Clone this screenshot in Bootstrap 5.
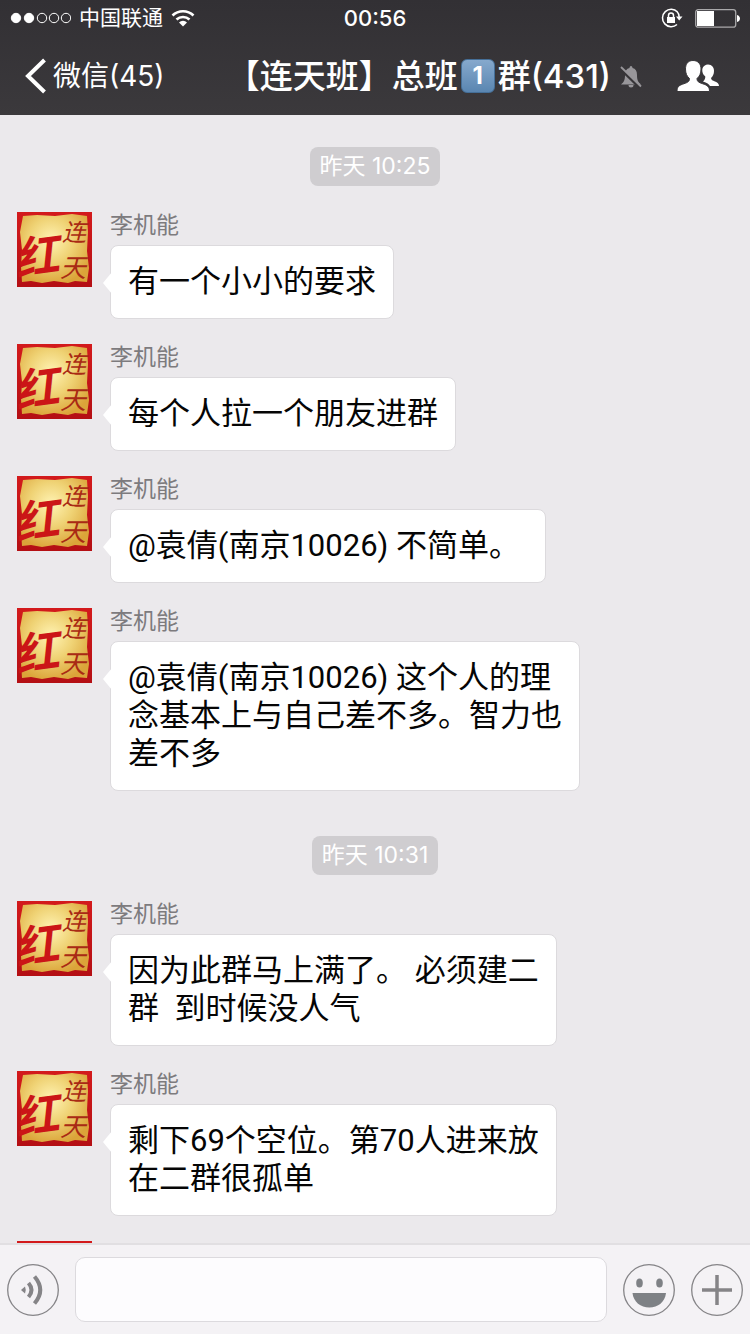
<!DOCTYPE html>
<html lang="zh-CN">
<head>
<meta charset="utf-8">
<meta name="viewport" content="width=device-width, initial-scale=1">
<title>微信群聊</title>
<link href="https://cdn.jsdelivr.net/npm/bootstrap@5.3.0/dist/css/bootstrap.min.css" rel="stylesheet">
<style>
  body { font-family: Inter, "Noto Sans CJK SC", sans-serif; background: #ebe9ec; color: #050505; }
  svg { display: block; flex: none; }
  .topbar { background: linear-gradient(#323034, #3b393c); color: #fff; }
  .statusbar { height: 36px; padding: 0 10px; font-size: 21px; line-height: 36px; }
  .clock { font-size: 22px; font-weight: 500; }
  .titlebar { height: 79px; padding: 0 31px 0 25px; }
  .back-link { font-size: 28px; line-height: 40px; gap: 6px; }
  .chat-title { font-size: 33px; line-height: 44px; font-weight: 500; gap: 3px; }
  .keycap { width: 34px; height: 34px; border-radius: 6px; font-size: 24px; line-height: 32px; font-weight: 700;
            background: linear-gradient(#86a9cd, #5a86b1); border: 1px solid #456f98; }
  .bell { margin: 3px 35px 0 9px; }
  .chat-log { min-height: 0; padding: 12px 17px 0; }
  .time-pill { margin: 20px 0 26px; padding: 0 10px; border-radius: 8px; background: #cfcdd0; color: #fff;
               font-size: 23px; line-height: 39px; }
  .msg { gap: 18px; margin-bottom: 25px; }
  .sender { font-size: 23px; line-height: 26px; margin-bottom: 7px; color: #7d7b7e; }
  .bubble { max-width: 470px; padding: 17px; font-family: Roboto, "Noto Sans CJK SC", sans-serif; font-size: 31px; line-height: 38px;
            background: #fff; border: 1px solid #dcdadd; border-radius: 8px; white-space: pre-wrap; }
  .bubble::before { content: ""; position: absolute; left: -8px; top: 26px; width: 9px; height: 22px;
                    background: #fff; clip-path: polygon(100% 0, 0 50%, 100% 100%); }
  .composer { padding: 12px 7px; gap: 16px; background: #f4f2f5; border-top: 2px solid #e1dfe2; }
  .composer .form-control { height: 65px; border: 1px solid #dcdade; border-radius: 10px; background: #fdfcfe; font-size: 31px; }
</style>
</head>
<body>
<svg width="0" height="0" class="position-absolute" aria-hidden="true">
  <defs>
    <radialGradient id="gold" cx="45%" cy="38%" r="65%">
      <stop offset="0" stop-color="#fff3b4"/><stop offset=".5" stop-color="#efd274"/><stop offset="1" stop-color="#dba439"/>
    </radialGradient>
    <linearGradient id="seal" x2="0" y2="1"><stop offset="0" stop-color="#d31a1c"/><stop offset="1" stop-color="#b40f14"/></linearGradient>
    <symbol id="avatar" viewBox="0 0 75 75">
      <rect width="75" height="75" fill="url(#seal)"/>
      <path fill="url(#gold)" d="M6 4 20 3 38 4 55 2 70 4 71 20 70 39 72 56 70 70 58 69 51 71 37 69 25 71 14 69 5 70 4 55 5 38 3 20Z"/>
      <g fill="#cb1517" font-family="Noto Sans CJK SC, sans-serif" font-style="italic">
        <text x="-3" y="60" font-size="44" font-weight="700" transform="rotate(-8 24 40)">红</text>
        <g fill="#a92a14"><text x="45" y="29" font-size="24">连</text>
        <text x="43" y="65" font-size="26">天</text></g>
      </g>
    </symbol>
  </defs>
</svg>

<div class="d-flex flex-column vh-100 overflow-hidden">
  <header class="topbar">
    <div class="statusbar row g-0 align-items-center">
      <div class="col d-flex align-items-center">
        <svg class="me-2" width="61" height="12" viewBox="0 0 61 12" fill="none" stroke="#fff">
          <g fill="#fff"><circle cx="6" cy="6" r="4.7"/><circle cx="19" cy="6" r="4.7"/></g>
          <circle cx="32" cy="6" r="4.7"/><circle cx="44" cy="6" r="4.7"/><circle cx="56" cy="6" r="4.7"/>
        </svg>
        <span>中国联通</span>
        <svg class="ms-2" width="24" height="18" viewBox="0 0 24 18" fill="none" stroke="#fff" stroke-width="2.6">
          <path d="M1.500 6.500a15 15 0 0 1 21 0M5.500 10.500a9.500 9.500 0 0 1 13 0"/><path fill="#fff" stroke="none" d="M12 17.500 8 13.400a5.800 5.800 0 0 1 8 0z"/>
        </svg>
      </div>
      <div class="col-auto clock">00:56</div>
      <div class="col d-flex align-items-center justify-content-end gap-2">
        <svg class="me-1" width="22" height="20" viewBox="0 0 22 20" fill="none" stroke="#fff" stroke-width="1.5">
          <path d="M16.500 4A8.700 8.700 0 1 0 16 16.500M15.800 3.200A8.700 8.700 0 0 1 18.200 9"/><path fill="#fff" stroke="none" d="M15 8.500h6.500L18.200 12.500zM6 9h8v6H6z"/><path d="M7.500 9V7.500a2.500 2.500 0 0 1 5 0V9"/>
        </svg>
        <svg width="45" height="19" viewBox="0 0 45 19"><rect x=".7" y=".7" width="40" height="17.500" rx="2.500" fill="none" stroke="#a9a8aa" stroke-width="1.300"/><path fill="#fff" d="M2 2h17v15H2zM42 6c4 1 4 6 0 7z"/></svg>
      </div>
    </div>
    <nav class="titlebar d-flex align-items-center">
      <a href="#" class="back-link d-flex align-items-center text-white text-decoration-none">
        <svg width="22" height="36" viewBox="0 0 22 36" fill="none" stroke="#fff" stroke-width="4"><path d="M19.500 2 3 18l16.500 16"/></svg>
        <span>微信(45)</span>
      </a>
      <h1 class="chat-title d-flex align-items-center text-nowrap mb-0 ms-auto"><span>【连天班】总班</span><span class="keycap text-center">1</span><span>群(431)</span></h1>
      <svg class="bell" width="22" height="24" viewBox="0 0 22 24"><path fill="#98969a" d="M11 1c1 0 1.500 1 1.500 2 3 .8 4.500 3 4.500 7 0 5 1 7 4 9.500H1C4 17 5 15 5 10c0-4 1.500-6.200 4.500-7 0-1 .5-2 1.500-2zM8.500 20h5a2.500 2.500 0 0 1-5 0z"/><path d="M1 4.500 20 23" stroke="#373538" stroke-width="2.500"/><path d="M1 2 21 21.500" stroke="#98969a" stroke-width="1.800"/></svg>
      <button type="button" class="btn p-0 border-0" aria-label="群成员">
        <svg width="42" height="32" viewBox="0 0 42 32" fill="#fff"><path d="M31 4.500c4 0 6 3 6 6.500 0 3-1.200 5.500-3 7 .3 2 1.500 2.500 4 3.500 2.500 1 4 2 4 4.500H33c-1-2-3-3.200-7-4.500 2-1.500 2.500-4 2.200-5.300C26 15 25 12 25.300 9 26 6 28.500 4.500 31 4.500z"/><path stroke="#39373a" stroke-width="1" d="M16 .5c5.500 0 8 4 8 8.500s-1.500 7.500-4 9.500c0 3 1.500 3.800 5.500 5.200 5 1.600 7 3 7 7.800H0c0-4.800 2-6.200 7-7.800 4-1.400 5.500-2.200 5.500-5.200-2.500-2-4-5-4-9.500s2-8.500 7.500-8.500z"/></svg>
      </button>
    </nav>
  </header>

  <main class="chat-log flex-fill overflow-hidden">
    <div class="d-flex justify-content-center"><time class="time-pill">昨天 10:25</time></div>
    <article class="msg d-flex align-items-start">
      <svg width="75" height="75" role="img" aria-label="头像"><use href="#avatar"/></svg>
      <div><div class="sender">李机能</div><div class="bubble position-relative">有一个小小的要求</div></div>
    </article>
    <article class="msg d-flex align-items-start">
      <svg width="75" height="75" role="img" aria-label="头像"><use href="#avatar"/></svg>
      <div><div class="sender">李机能</div><div class="bubble position-relative">每个人拉一个朋友进群</div></div>
    </article>
    <article class="msg d-flex align-items-start">
      <svg width="75" height="75" role="img" aria-label="头像"><use href="#avatar"/></svg>
      <div><div class="sender">李机能</div><div class="bubble position-relative">@袁倩(南京10026) 不简单。&nbsp;</div></div>
    </article>
    <article class="msg d-flex align-items-start">
      <svg width="75" height="75" role="img" aria-label="头像"><use href="#avatar"/></svg>
      <div><div class="sender">李机能</div><div class="bubble position-relative">@袁倩(南京10026) 这个人的理<br>念基本上与自己差不多。智力也<br>差不多</div></div>
    </article>
    <div class="d-flex justify-content-center"><time class="time-pill">昨天 10:31</time></div>
    <article class="msg d-flex align-items-start">
      <svg width="75" height="75" role="img" aria-label="头像"><use href="#avatar"/></svg>
      <div><div class="sender">李机能</div><div class="bubble position-relative">因为此群马上满了。 必须建二<br>群  到时候没人气</div></div>
    </article>
    <article class="msg d-flex align-items-start">
      <svg width="75" height="75" role="img" aria-label="头像"><use href="#avatar"/></svg>
      <div><div class="sender">李机能</div><div class="bubble position-relative">剩下69个空位。第70人进来放<br>在二群很孤单</div></div>
    </article>
    <article class="msg d-flex align-items-start">
      <svg width="75" height="75" role="img" aria-label="头像"><use href="#avatar"/></svg>
    </article>
  </main>

  <footer class="composer d-flex align-items-center">
    <button type="button" class="btn p-0 border-0" aria-label="语音">
      <svg width="52" height="52" viewBox="0 0 52 52" fill="none" stroke="#858487"><circle cx="26" cy="26" r="25.300" stroke-width="1.300"/><path fill="#858487" stroke="none" d="M14 26l4-3.500q1.500 3.500 0 7z"/><path stroke-width="4" d="M21.500 19q6 7 0 14M27.500 12.500q11.500 13.500 0 27"/></svg>
    </button>
    <input type="text" class="form-control flex-fill" aria-label="输入消息">
    <button type="button" class="btn p-0 border-0" aria-label="表情">
      <svg width="52" height="52" viewBox="0 0 52 52" fill="#7e8185"><circle cx="26" cy="26" r="25.300" fill="none" stroke="#858487" stroke-width="1.300"/><ellipse cx="16.500" cy="19" rx="3.300" ry="4.500"/><ellipse cx="36.500" cy="19" rx="3.300" ry="4.500"/><path d="M9.500 29h33.500c-1 9-8 14.500-16.700 14.500S10.500 38 9.500 29z"/></svg>
    </button>
    <button type="button" class="btn p-0 border-0" aria-label="更多">
      <svg width="52" height="52" viewBox="0 0 52 52" fill="none" stroke="#858487"><circle cx="26" cy="26" r="25.300" stroke-width="1.300"/><path stroke-width="3.500" d="M26 11v30M11 26h30"/></svg>
    </button>
  </footer>
</div>
<script src="https://cdn.jsdelivr.net/npm/bootstrap@5.3.0/dist/js/bootstrap.bundle.min.js"></script>
</body>
</html>
